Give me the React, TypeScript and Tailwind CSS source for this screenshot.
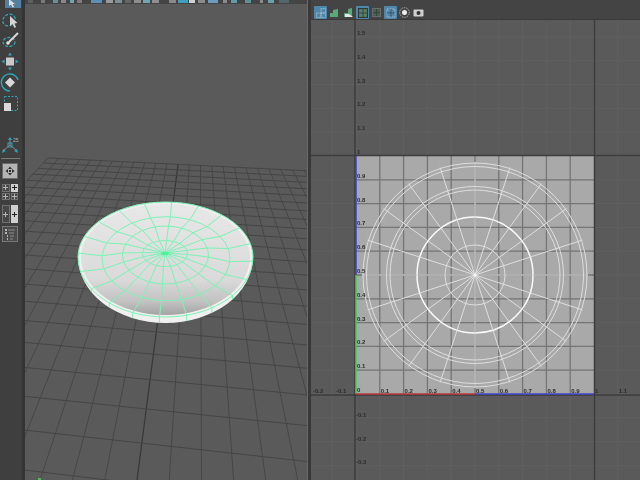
import React from "react";

const FONT = { fontFamily: '"Liberation Sans", Arial, sans-serif' };

// ground plane homography, found from the two vanishing points in the picture
const project = (x: number, z: number) => {
  const g = -0.00391;
  const h = -0.0498;
  const w = g * x + h * z + 1;
  return {
    x: (g * x * -4380 + h * z * 200 + 165) / w,
    y: (g * x * -61 + h * z * -4 + 265) / w,
  };
};

const range = (a: number, b: number) =>
  Array.from({ length: b - a + 1 }, (_, i) => a + i);

function GroundGrid() {
  return (
    <g fill="none">
      {range(-12, 12).map((i) => {
        const a = project(i, -12);
        const b = project(i, 12);
        return (
          <line
            key={"x" + i}
            x1={a.x}
            y1={a.y}
            x2={b.x}
            y2={b.y}
            stroke={i === 0 ? "#383838" : "#474747"}
            strokeWidth={i === 0 ? 1.2 : 1}
          />
        );
      })}
      {range(-12, 12).map((i) => {
        const a = project(-12, i);
        const b = project(12, i);
        return (
          <line key={"z" + i} x1={a.x} y1={a.y} x2={b.x} y2={b.y} stroke="#454545" strokeWidth={1} />
        );
      })}
    </g>
  );
}

const RINGS = [
  { cx: 165, cy: 253.5, rx: 22.5, ry: 13 },
  { cx: 165.5, cy: 255, rx: 43, ry: 29 },
  { cx: 166, cy: 258.7, rx: 64, ry: 42 },
];

// inner rim: flatter behind the centre than in front of it
const RIM_TOP = 55;
const RIM_BOTTOM = 60;

function Plate() {
  return (
    <g>
      <defs>
        <linearGradient id="dish" x1="0" y1="0" x2="0" y2="1">
          <stop offset="0%" stopColor="#e8e8e8" />
          <stop offset="68%" stopColor="#dadada" />
          <stop offset="88%" stopColor="#c2c2c2" />
          <stop offset="100%" stopColor="#a4a4a4" />
        </linearGradient>
      </defs>
      <path d="M78 257 A87.5 55 0 0 1 253 257 A87.5 66 0 0 1 78 257 Z" fill="#f0f0f0" />
      <path
        d="M81 257 A84.5 53 0 0 1 250 257 A84.5 58 0 0 1 81 257 Z"
        fill="url(#dish)"
      />
      <g fill="none" stroke="#7cf3b6" strokeWidth={1}>
        {RINGS.map((r, i) => (
          <ellipse key={i} cx={r.cx} cy={r.cy} rx={r.rx} ry={r.ry} />
        ))}
        <path d={`M78 257 A87.5 ${RIM_TOP} 0 0 1 253 257 A87.5 ${RIM_BOTTOM} 0 0 1 78 257 Z`} />
        {range(0, 19).map((k) => {
          const t = ((4 + k * 18) * Math.PI) / 180;
          const s = Math.sin(t);
          const edge = { cx: 165.5, cy: 257, rx: 87.5, ry: s > 0 ? RIM_BOTTOM : RIM_TOP };
          const lip = { cx: 165.5, cy: 257, rx: 87.5, ry: 66 };
          const pts = [{ cx: 165, cy: 253, rx: 0, ry: 0 }, ...RINGS, edge, ...(s > 0 ? [lip] : [])]
            .map((r) => `${r.cx + r.rx * Math.cos(t)},${r.cy + r.ry * s}`)
            .join(" ");
          return <polyline key={k} points={pts} />;
        })}
      </g>
      <ellipse cx={165} cy={253.5} rx={4} ry={1.8} fill="#52f09a" />
    </g>
  );
}

function Viewport() {
  return (
    <svg viewBox="25 4 282 476" className="block w-[282px] h-[476px] blur-[0.3px]">
      <GroundGrid />
      <Plate />
      <path d="M38 479 h3" stroke="#4dd86f" strokeWidth={1.5} />
    </svg>
  );
}

const U0 = 356;
const V0 = 394;
const S = 238;
const CX = U0 + S / 2;
const CY = V0 - S / 2;

function UvLabel({ x, y, children }: { x: number; y: number; children: string }) {
  return (
    <text x={x} y={y} fontSize={6} fontWeight={700} fill="#2c2c2c" style={FONT}>
      {children}
    </text>
  );
}

function UvGraph() {
  const steps = range(-3, 13);
  const vsteps = range(-4, 16);
  return (
    <svg viewBox="311 20 329 460" className="block w-[329px] h-[460px] blur-[0.3px]">
      {steps.map((i) => {
        const x = U0 + (S * i) / 10;
        return <line key={"ov" + i} x1={x} y1={20} x2={x} y2={480} stroke="#606060" />;
      })}
      {vsteps.map((i) => {
        const y = V0 - (S * i) / 10;
        return <line key={"oh" + i} x1={311} y1={y} x2={640} y2={y} stroke="#606060" />;
      })}
      <rect x={U0} y={V0 - S} width={S} height={S} fill="#a9a9a9" />
      {range(1, 9).map((i) => (
        <g key={i} stroke="#757575" strokeWidth={1.3}>
          <line x1={U0 + (S * i) / 10} y1={V0 - S} x2={U0 + (S * i) / 10} y2={V0} />
          <line x1={U0} y1={V0 - (S * i) / 10} x2={U0 + S} y2={V0 - (S * i) / 10} />
        </g>
      ))}
      <line x1={U0 - 1} y1={20} x2={U0 - 1} y2={480} stroke="#3c3c3c" strokeWidth={1.5} />
      <line x1={U0 + S + 0.5} y1={20} x2={U0 + S + 0.5} y2={480} stroke="#3c3c3c" strokeWidth={1.5} />
      <line x1={311} y1={V0 - S - 0.5} x2={640} y2={V0 - S - 0.5} stroke="#3c3c3c" strokeWidth={1.5} />
      <line x1={311} y1={V0 + 1} x2={640} y2={V0 + 1} stroke="#3c3c3c" strokeWidth={1.5} />

      <g fill="none" stroke="#dedede">
        {[112, 108.5, 88.5, 85].map((r) => (
          <circle key={r} cx={CX} cy={CY} r={r} strokeWidth={1} />
        ))}
        <circle cx={CX} cy={CY} r={58} stroke="#fbfbfb" strokeWidth={1.5} />
        <circle cx={CX} cy={CY} r={30} strokeWidth={1} />
        {range(0, 19).map((k) => {
          const t = (k * 18 * Math.PI) / 180;
          return (
            <line
              key={k}
              x1={CX}
              y1={CY}
              x2={CX + 113 * Math.cos(t)}
              y2={CY + 113 * Math.sin(t)}
              strokeWidth={1}
            />
          );
        })}
      </g>
      <circle cx={CX} cy={CY} r={1.5} fill="#ffffff" />

      <line x1={356} y1={156} x2={356} y2={CY} stroke="#3f3fd0" strokeWidth={1.5} />
      <line x1={356} y1={CY} x2={356} y2={394} stroke="#3fcf4f" strokeWidth={1.5} />
      <line x1={356} y1={394} x2={CX} y2={394} stroke="#b83a3a" strokeWidth={1.5} />
      <line x1={CX} y1={394} x2={594} y2={394} stroke="#3f46c8" strokeWidth={1.5} />

      {range(1, 15).map((i) => (
        <UvLabel key={"v" + i} x={357} y={V0 - (S * i) / 10 - 2}>
          {i === 10 ? "1" : (i / 10).toFixed(1)}
        </UvLabel>
      ))}
      {range(1, 3).map((i) => (
        <UvLabel key={"nv" + i} x={356} y={V0 + (S * i) / 10 - 1}>
          {"-" + (i / 10).toFixed(1)}
        </UvLabel>
      ))}
      <UvLabel x={357} y={392}>0</UvLabel>
      {[1, 2, 3, 4, 5, 6, 7, 8, 9, 11].map((i) => (
        <UvLabel key={"u" + i} x={U0 + (S * i) / 10 + 1} y={393}>
          {(i / 10).toFixed(1)}
        </UvLabel>
      ))}
      <UvLabel x={595} y={393}>1</UvLabel>
      <UvLabel x={313} y={393}>-0.2</UvLabel>
      <UvLabel x={336} y={393}>-0.1</UvLabel>
    </svg>
  );
}

// the row of icons cut off by the top of the picture
const CUT_ICONS = [
  { w: 5, ml: 3, c: "#5f5f5f" },
  { w: 4, ml: 8, c: "#7a7a7a" },
  { w: 5, ml: 8, c: "#6b8f9a" },
  { w: 5, ml: 3, c: "#888888" },
  { w: 4, ml: 4, c: "#6fa4b0" },
  { w: 5, ml: 3, c: "#7d7d7d" },
  { w: 11, ml: 9, c: "#5b8fb8" },
  { w: 7, ml: 4, c: "#9a9a9a" },
  { w: 7, ml: 2, c: "#7d8f94" },
  { w: 6, ml: 3, c: "#666666" },
  { w: 7, ml: 3, c: "#8f8f8f" },
  { w: 7, ml: 2, c: "#6da6b6" },
  { w: 7, ml: 2, c: "#8f8f8f" },
  { w: 7, ml: 10, c: "#8a8a8a" },
  { w: 10, ml: 2, c: "#3f9fc0" },
  { w: 6, ml: 1, c: "#d0d0d0" },
  { w: 7, ml: 3, c: "#8a8a8a" },
  { w: 10, ml: 3, c: "#6b9cc0" },
  { w: 4, ml: 5, c: "#8a8a8a" },
  { w: 6, ml: 4, c: "#5f9aa8" },
  { w: 6, ml: 8, c: "#5f8f98" },
  { w: 3, ml: 9, c: "#8a8a8a" },
  { w: 6, ml: 5, c: "#66a0a8" },
  { w: 10, ml: 5, c: "#55666c" },
];

function CutIcons() {
  return (
    <div className="h-[4px] flex bg-[#444444] overflow-hidden">
      {CUT_ICONS.map((ic, i) => (
        <div
          key={i}
          className="h-[3px] shrink-0"
          style={{ width: ic.w, marginLeft: ic.ml, background: ic.c }}
        />
      ))}
    </div>
  );
}

const TEAL = "#2fa5b5";

function LeftToolbar() {
  return (
    <aside className="w-[25px] h-[480px] shrink-0 flex flex-col items-start bg-[#3f3f3f] border-r-[3px] border-[#343434]">
      {/* select */}
      <svg width="22" height="9" viewBox="0 0 22 9" className="block">
        <rect x="5" y="-3" width="16" height="11" fill="#54809f" />
        <path d="M9 -1 L9 6 L11 4.5 L12.5 7.5 L14 7 L12.7 4 L15 4 Z" fill="#dddddd" />
      </svg>
      {/* lasso */}
      <svg width="22" height="18" viewBox="0 0 22 18" className="block mt-[3px]">
        <ellipse cx="9" cy="8" rx="6.5" ry="5.5" transform="rotate(-35 9 8)" fill="none" stroke={TEAL} strokeWidth="1.3" strokeDasharray="3 1.5" />
        <path d="M10 4 L10 14 L12.5 12 L14.5 16 L16 15 L14.5 11.5 L17.5 11 Z" fill="#d5d5d5" />
      </svg>
      {/* paint select */}
      <svg width="22" height="17" viewBox="0 0 22 17" className="block mt-[2px]">
        <ellipse cx="9" cy="10" rx="6" ry="4.5" fill="none" stroke={TEAL} strokeWidth="1.3" strokeDasharray="3 1.5" />
        <path d="M18 1 L9 10" stroke="#d8d8d8" strokeWidth="2" />
        <circle cx="8" cy="11" r="1.8" fill="#e0e0e0" />
      </svg>
      {/* move */}
      <svg width="22" height="19" viewBox="0 0 22 19" className="block mt-[3px]">
        <rect x="6" y="5.5" width="8" height="8" fill="#c9c9c9" />
        <path d="M10 0.5 L12 3.5 H8 Z M10 18.5 L8 15.5 H12 Z M1.5 9.5 L4.5 7.5 V11.5 Z M18.5 9.5 L15.5 11.5 V7.5 Z" fill={TEAL} />
      </svg>
      {/* rotate */}
      <svg width="22" height="19" viewBox="0 0 22 19" className="block mt-[2px]">
        <path d="M10 18 A8.5 8.5 0 1 1 18 7" fill="none" stroke={TEAL} strokeWidth="1.4" />
        <path d="M10 4.5 L15 9.5 L10 14.5 L5 9.5 Z" fill="#d8d8d8" />
      </svg>
      {/* scale */}
      <svg width="22" height="18" viewBox="0 0 22 18" className="block mt-[3px]">
        <rect x="4.5" y="1.5" width="13" height="14" fill="none" stroke={TEAL} strokeWidth="1" strokeDasharray="2 1.5" />
        <rect x="4" y="8" width="7" height="8" fill="#dadada" />
      </svg>
      {/* last tool */}
      <svg width="22" height="17" viewBox="0 0 22 17" className="block mt-[24px]">
        <path d="M10 8 V2 M10 8 L4 13 M10 8 L16 13" stroke="#8a8a8a" strokeWidth="1" />
        <rect x="8" y="6" width="4" height="4" fill="none" stroke={TEAL} />
        <path d="M10 0 L12 3 H8 Z M2 16 L3 12 L6 14 Z M18 16 L14 14 L17 12 Z" fill={TEAL} />
        <text x="13" y="5" fontSize="5" fill="#b5b5b5" style={FONT}>25</text>
      </svg>
      <div className="w-[19px] h-[1px] ml-[1px] mt-[4px] bg-[#7a7a7a]" />
      {/* panel layouts */}
      <div className="w-[16px] h-[16px] ml-[2px] mt-[4px] flex items-center justify-center bg-[#b4b4b4] border border-[#6a6a6a]">
        <Dots />
      </div>
      <div className="w-[16px] h-[16px] ml-[2px] mt-[5px] grid grid-cols-2 gap-[1px]">
        <Cell />
        <Cell on />
        <Cell />
        <Cell />
      </div>
      <div className="w-[16px] h-[18px] ml-[2px] mt-[5px] grid grid-cols-2 gap-[1px]">
        <Cell />
        <Cell on />
      </div>
      <svg width="16" height="16" viewBox="0 0 16 16" className="block ml-[2px] mt-[3px]">
        <rect x="0.5" y="0.5" width="15" height="15" fill="#4b4b4b" stroke="#777777" />
        <path d="M3 4 H5 M3 7 H5 M5 10 H6 M5 13 H6" stroke="#d8d8d8" strokeWidth="1.4" />
        <path d="M6 4 H13 M7 7 H12 M8 10 H12 M8 13 H11" stroke="#a0a0a0" strokeWidth="0.8" />
      </svg>
    </aside>
  );
}

function Dots() {
  return (
    <svg width="10" height="10" viewBox="0 0 10 10">
      <path d="M5 0.5 L7 3 H3 Z M5 9.5 L3 7 H7 Z M0.5 5 L3 3 V7 Z M9.5 5 L7 7 V3 Z" fill="#2e2e2e" />
      <rect x="4" y="4" width="2" height="2" fill="#2e2e2e" />
    </svg>
  );
}

function Cell({ on }: { on?: boolean }) {
  return (
    <div
      className={
        on
          ? "flex items-center justify-center bg-[#cfcfcf] text-[#222222]"
          : "flex items-center justify-center bg-[#474747] border border-[#727272] text-[#b5b5b5]"
      }
    >
      <div className="relative w-[5px] h-[5px]">
        <div className="absolute left-[2px] top-0 w-[1px] h-[5px] bg-current" />
        <div className="absolute left-0 top-[2px] w-[5px] h-[1px] bg-current" />
      </div>
    </div>
  );
}

function ToolBtn({ active, children }: { active?: boolean; children: React.ReactNode }) {
  return (
    <div
      className={
        active
          ? "w-[13px] h-[13px] shrink-0 flex items-center justify-center rounded-[1px] bg-[#4f86ac]"
          : "w-[13px] h-[13px] shrink-0 flex items-center justify-center"
      }
    >
      {children}
    </div>
  );
}

function UvToolbar() {
  return (
    <div className="h-[20px] pt-[6px] pl-[3px] flex gap-[1px] bg-[#444444] border-b border-[#3a3a3a]">
      <ToolBtn active>
        <svg width="10" height="10" viewBox="0 0 9 9" fill="none" stroke="#a8c0cc" strokeWidth="0.8" strokeDasharray="1 0.5">
          <rect x="4.5" y="0.5" width="4" height="4" />
          <rect x="0.5" y="4.5" width="4" height="4" />
          <rect x="4.5" y="4.5" width="4" height="4" />
        </svg>
      </ToolBtn>
      <ToolBtn>
        <svg width="9" height="8" viewBox="0 0 9 8">
          <path d="M0 8 V4 H3 V1 L8 0 V8 Z" fill="#58a878" />
        </svg>
      </ToolBtn>
      <ToolBtn>
        <svg width="10" height="9" viewBox="0 0 10 9">
          <path d="M0 9 V5 H4 V1 L8 0 V9 Z" fill="#58a878" />
          <path d="M1 9 V6 H5 L9 9 Z" fill="#e6e6e6" />
        </svg>
      </ToolBtn>
      <ToolBtn active>
        <svg width="10" height="10" viewBox="0 0 9 9">
          <rect x="0.5" y="0.5" width="8" height="8" fill="#58806a" stroke="#2f3a34" />
          <path d="M4.5 1 V8 M1 4.5 H8" stroke="#2f3a34" strokeWidth="0.7" />
        </svg>
      </ToolBtn>
      <ToolBtn>
        <svg width="9" height="9" viewBox="0 0 9 9">
          <rect x="0.5" y="0.5" width="8" height="8" fill="#47604f" stroke="#6b6b6b" />
          <path d="M4.5 1 V8 M1 4.5 H8" stroke="#2f3a34" strokeWidth="0.7" />
        </svg>
      </ToolBtn>
      <ToolBtn active>
        <svg width="10" height="10" viewBox="0 0 10 10" fill="none" stroke="#b9c6cc" strokeWidth="0.8" strokeDasharray="1 0.5">
          <rect x="1" y="1" width="8" height="8" />
          <path d="M5 1 V9 M1 5 H9" stroke="#333333" />
        </svg>
      </ToolBtn>
      <ToolBtn>
        <svg width="11" height="11" viewBox="0 0 11 11">
          <circle cx="5.5" cy="5.5" r="4.8" fill="none" stroke="#bdbdbd" strokeDasharray="1 0.8" />
          <circle cx="5.5" cy="5.5" r="2.5" fill="#eeeeee" />
        </svg>
      </ToolBtn>
      <ToolBtn>
        <svg width="11" height="8" viewBox="0 0 11 8">
          <rect x="0.5" y="0.5" width="10" height="7" rx="1" fill="#cfcfcf" />
          <circle cx="5.5" cy="4" r="2" fill="#333333" />
        </svg>
      </ToolBtn>
    </div>
  );
}

export default function App() {
  return (
    <div className="w-[640px] h-[480px] flex overflow-hidden bg-[#5a5a5a]" style={FONT}>
      <LeftToolbar />
      <div className="w-[283px] shrink-0 flex flex-col border-r border-[#6a6a6a]">
        <CutIcons />
        <Viewport />
      </div>
      <div className="w-[3px] shrink-0 bg-[#393939]" />
      <div className="flex-1 flex flex-col">
        <UvToolbar />
        <UvGraph />
      </div>
    </div>
  );
}
